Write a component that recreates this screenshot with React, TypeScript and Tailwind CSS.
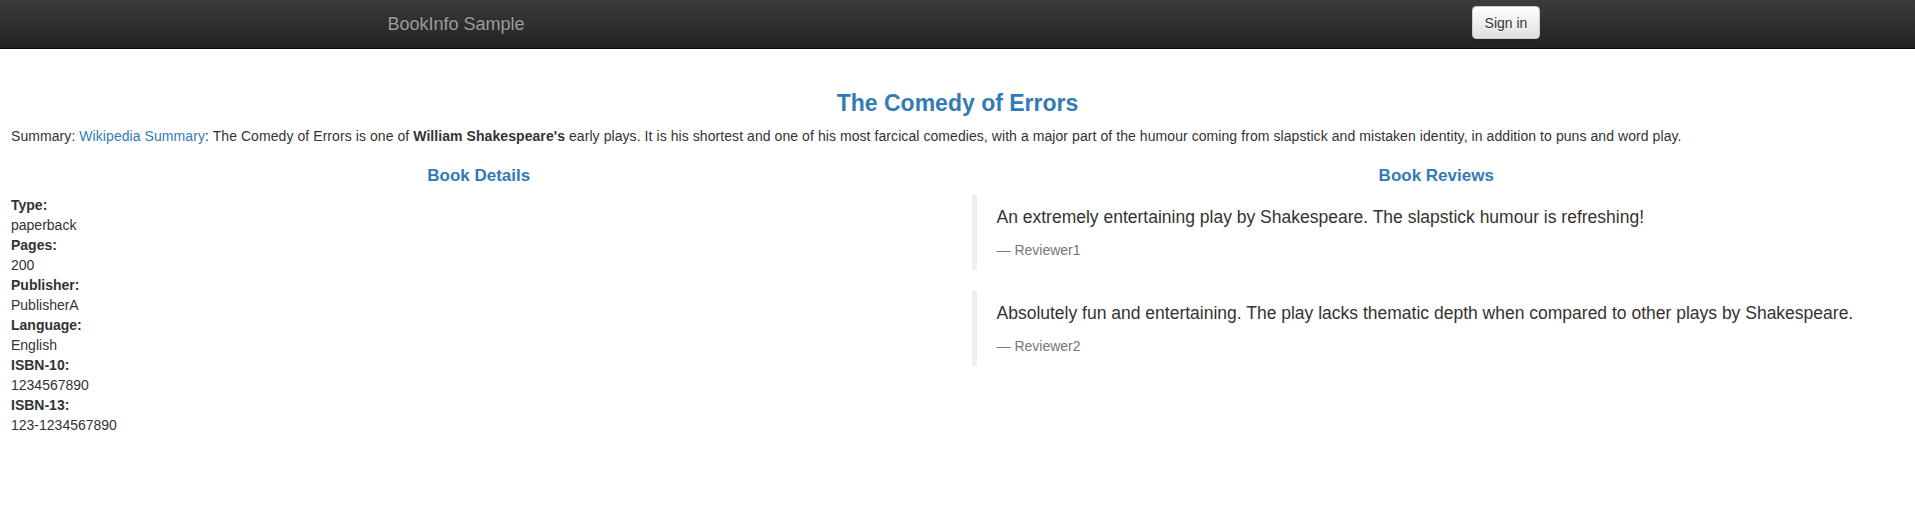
import React from "react";

const details: [string, string][] = [
  ["Type:", "paperback"],
  ["Pages:", "200"],
  ["Publisher:", "PublisherA"],
  ["Language:", "English"],
  ["ISBN-10:", "1234567890"],
  ["ISBN-13:", "123-1234567890"],
];

const reviews: [string, string][] = [
  ["An extremely entertaining play by Shakespeare. The slapstick humour is refreshing!", "Reviewer1"],
  ["Absolutely fun and entertaining. The play lacks thematic depth when compared to other plays by Shakespeare.", "Reviewer2"],
];

export default function App() {
  return (
    <div
      className="min-h-[526px] bg-white text-[#333] text-[14px] leading-[20px]"
      style={{ fontFamily: '"Liberation Sans", Arial, Helvetica, sans-serif' }}
    >
      <nav className="h-[49px] border-b border-[#080808] bg-gradient-to-b from-[#3c3c3c] to-[#222]">
        <div className="w-[1170px] mx-auto px-[15px] flex justify-between items-start">
          <a
            href="#"
            className="-ml-[15px] px-[15px] py-[14px] text-[18px] leading-[20px] text-[#9d9d9d] [text-shadow:0_-1px_0_rgba(0,0,0,0.25)]"
          >
            BookInfo Sample
          </a>
          <button
            type="button"
            className="mt-[6px] -mr-[12.5px] h-[33px] w-[68px] rounded-[4px] border border-[#ccc] bg-gradient-to-b from-white to-[#e0e0e0] text-[14px] leading-[20px] text-[#333] [text-shadow:0_1px_0_#fff] shadow-[inset_0_1px_0_rgba(255,255,255,0.15),0_1px_1px_rgba(0,0,0,0.075)]"
          >
            Sign in
          </button>
        </div>
      </nav>

      <div className="pt-[20px] px-[11px]">
        <h3 className="mt-[21px] mb-[10px] text-center text-[23px] leading-[26.4px] font-bold text-[#337ab7]">
          The Comedy of Errors
        </h3>
        <p className="mb-[10px] tracking-[0.07px]">
          Summary: <a href="#" className="text-[#337ab7]">Wikipedia Summary</a>: The Comedy of Errors is one of{" "}
          <b>William Shakespeare's</b> early plays. It is his shortest and one of his most farcical comedies, with a
          major part of the humour coming from slapstick and mistaken identity, in addition to puns and word play.
        </p>
      </div>

      <div className="grid grid-cols-2">
        <div className="px-[11px]">
          <h4 className="mt-[10px] mb-[9px] text-center text-[17px] leading-[19.8px] font-bold text-[#337ab7]">
            Book Details
          </h4>
          <dl className="mb-[20px]">
            {details.map(([k, v]) => (
              <React.Fragment key={k}>
                <dt className="font-bold">{k}</dt>
                <dd>{v}</dd>
              </React.Fragment>
            ))}
          </dl>
        </div>
        <div className="px-[14px]">
          <h4 className="mt-[10px] mb-[9px] text-center text-[17px] leading-[19.8px] font-bold text-[#337ab7]">
            Book Reviews
          </h4>
          {reviews.map(([text, who]) => (
            <blockquote key={who} className="mb-[21px] border-l-[5px] border-[#eee] py-[10px] px-[20px]">
              <p className="mb-[10px] text-[17.5px] leading-[25px]">{text}</p>
              <small className="block text-[14px] leading-[20px] text-[#777]">&mdash; {who}</small>
            </blockquote>
          ))}
        </div>
      </div>
    </div>
  );
}
